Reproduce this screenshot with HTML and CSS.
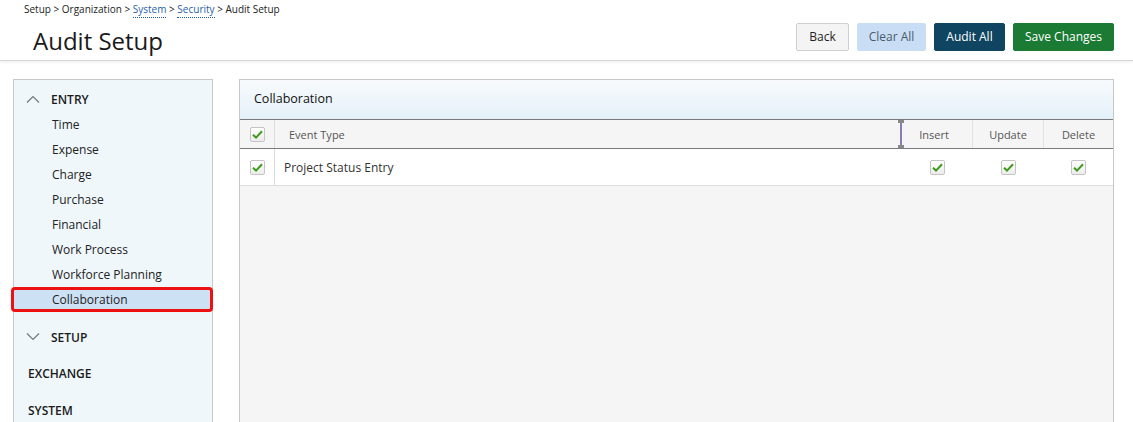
FILE: index.html
```html
<!DOCTYPE html>
<html>
<head>
<meta charset="utf-8">
<link rel="stylesheet" href="styles.css">
</head>
<body>
<header class="top">
  <div class="titles">
    <div class="crumbs">Setup &gt; Organization &gt; <a class="crumb-link">System</a> &gt; <a class="crumb-link">Security</a> &gt; Audit Setup</div>
    <h1 class="title">Audit Setup</h1>
  </div>
  <div class="actions">
    <button class="btn btn-back">Back</button>
    <button class="btn btn-clear">Clear All</button>
    <button class="btn btn-audit">Audit All</button>
    <button class="btn btn-save">Save Changes</button>
  </div>
</header>
<div class="content">
  <nav class="side">
    <div class="group-head"><svg class="chev" width="14" height="8" viewBox="0 0 14 8"><path d="M1 7.5L7 1.5L13 7.5" fill="none" stroke="#777" stroke-width="1.2"/></svg><span>ENTRY</span></div>
    <div class="item">Time</div>
    <div class="item">Expense</div>
    <div class="item">Charge</div>
    <div class="item">Purchase</div>
    <div class="item">Financial</div>
    <div class="item">Work Process</div>
    <div class="item">Workforce Planning</div>
    <div class="item item-active">Collaboration</div>
    <div class="group-head group-setup"><svg class="chev" width="14" height="8" viewBox="0 0 14 8"><path d="M1 0.5L7 6.5L13 0.5" fill="none" stroke="#777" stroke-width="1.2"/></svg><span>SETUP</span></div>
    <div class="plain-head">EXCHANGE</div>
    <div class="plain-head">SYSTEM</div>
  </nav>
  <section class="panel">
    <div class="panel-head">Collaboration</div>
    <div class="row row-head">
      <div class="c-check"><span class="cb"><svg width="11" height="9" viewBox="0 0 11 9"><path d="M1 4.8L4 7.6L10 1.2" fill="none" stroke="#3f9a1c" stroke-width="2"/></svg></span></div>
      <div class="c-type">Event Type</div>
      <div class="c-handle"></div>
      <div class="c-op c-insert">Insert</div>
      <div class="c-op">Update</div>
      <div class="c-op c-last">Delete</div>
    </div>
    <div class="row row-body">
      <div class="c-check"><span class="cb"><svg width="11" height="9" viewBox="0 0 11 9"><path d="M1 4.8L4 7.6L10 1.2" fill="none" stroke="#3f9a1c" stroke-width="2"/></svg></span></div>
      <div class="c-type c-type-body">Project Status Entry</div>
      <div class="c-op"><span class="cb"><svg width="11" height="9" viewBox="0 0 11 9"><path d="M1 4.8L4 7.6L10 1.2" fill="none" stroke="#3f9a1c" stroke-width="2"/></svg></span></div>
      <div class="c-op"><span class="cb"><svg width="11" height="9" viewBox="0 0 11 9"><path d="M1 4.8L4 7.6L10 1.2" fill="none" stroke="#3f9a1c" stroke-width="2"/></svg></span></div>
      <div class="c-op c-last"><span class="cb"><svg width="11" height="9" viewBox="0 0 11 9"><path d="M1 4.8L4 7.6L10 1.2" fill="none" stroke="#3f9a1c" stroke-width="2"/></svg></span></div>
    </div>
    <div class="panel-rest"></div>
  </section>
</div>
</body>
</html>
```
FILE: styles.css
```css
* { box-sizing: border-box; }
html, body { margin: 0; padding: 0; }
body {
  font-family: "Open Sans", "DejaVu Sans", sans-serif;
  color: #222;
  background: #fff;
  width: 1133px;
  height: 422px;
  overflow: hidden;
}
.top {
  height: 61px;
  display: flex;
  justify-content: space-between;
  align-items: flex-start;
  border-bottom: 1px solid #d6d6d6;
  box-shadow: 0 1px 3px rgba(0,0,0,0.08);
}
.titles { padding-left: 24px; }
.crumbs {
  font-size: 10px;
  line-height: 14px;
  padding-top: 2px;
  color: #222;
}
.crumb-link {
  color: #1f5fa8;
  border-bottom: 1px dotted #1f5fa8;
  padding-bottom: 1px;
}
.title {
  margin: 12px 0 0 9px;
  font-size: 24px;
  font-weight: 400;
  line-height: 26px;
  color: #1a1a1a;
}
.actions {
  display: flex;
  gap: 8px;
  padding: 23px 19px 0 0;
}
.btn {
  height: 28px;
  font-family: "Open Sans", "DejaVu Sans", sans-serif;
  font-size: 12px;
  border-radius: 2px;
  border: 1px solid transparent;
  padding: 0;
  line-height: 26px;
  white-space: nowrap;
  text-align: center;
}
.btn-back { background: #f4f4f4; border-color: #cfcfcf; color: #222; width: 53px; }
.btn-clear { background: #c9def5; border-color: #c9def5; color: #4a5a6a; width: 69px; }
.btn-audit { background: #0f4560; border-color: #0f4560; color: #fff; width: 71px; }
.btn-save { background: #1b7a33; border-color: #1b7a33; color: #fff; width: 101px; }

.content {
  display: flex;
  padding: 18px 0 0 13px;
  gap: 26px;
}
.side {
  width: 200px;
  height: 360px;
  background: #eff7fb;
  border: 1px solid #c8c8c8;
  padding-top: 9px;
  font-size: 12px;
}
.group-head {
  display: flex;
  align-items: center;
  height: 20px;
  font-weight: 600;
  font-size: 12px;
  padding-left: 12px;
  color: #1a1a1a;
}
.chev { margin-right: 11px; }
.group-setup { margin-top: 15px; }
.item {
  height: 25px;
  line-height: 25px;
  padding-left: 38px;
  color: #222;
}
.item:nth-child(2) { margin-top: 3px; }
.item-active {
  margin: 0 0 0 -3px;
  width: 202px;
  padding-left: 38px;
  background: #cde1f5;
  border: 3px solid #ee1111;
  border-radius: 4px;
  line-height: 19px;
}
.plain-head {
  font-weight: 600;
  font-size: 12px;
  padding-left: 14px;
  margin-top: 17px;
  height: 20px;
  line-height: 20px;
  color: #1a1a1a;
}
.group-setup + .plain-head { margin-top: 17px; }
.panel {
  width: 875px;
  height: 360px;
  border: 1px solid #c8c8c8;
  background: #f5f5f5;
  display: flex;
  flex-direction: column;
}
.panel-head {
  height: 40px;
  line-height: 38px;
  padding-left: 14px;
  font-size: 12.5px;
  font-weight: 500;
  color: #111;
  background: linear-gradient(#f8fbfd, #e3f0f8);
  border-bottom: 1px solid #7a7a7a;
}
.row { display: flex; align-items: center; }
.row-head {
  height: 29px;
  background: #f5f5f5;
  border-bottom: 1px solid #7a7a7a;
  font-size: 11px;
  color: #555;
}
.row-body {
  height: 37px;
  background: #fff;
  border-bottom: 1px solid #dedede;
  font-size: 12px;
}
.c-check {
  width: 35px;
  align-self: stretch;
  display: flex;
  align-items: center;
  justify-content: center;
  border-right: 1px solid #dcdcdc;
}
.c-type { flex: 1; padding-left: 14px; }
.c-type-body { padding-left: 9px; color: #333; }
.c-handle {
  width: 2px;
  align-self: stretch;
  background: #8a7bb3;
  position: relative;
}
.c-handle::before, .c-handle::after {
  content: "";
  position: absolute;
  left: -2px;
  width: 6px;
  height: 3px;
  background: #888;
}
.c-handle::before { top: 0; }
.c-handle::after { bottom: 0; }
.c-op {
  width: 71px;
  align-self: stretch;
  display: flex;
  align-items: center;
  justify-content: center;
  border-right: 1px solid #e2e2e2;
}
.c-insert { padding-right: 6px; }
.row-body .c-op { border-right: none; }
.c-last { width: 69px; border-right: none; }
.cb {
  width: 15px;
  height: 15px;
  border: 1px solid #c4c4c4;
  border-radius: 2px;
  background: linear-gradient(#fff, #ececec);
  display: flex;
  align-items: center;
  justify-content: center;
}
.panel-rest { flex: 1; }
```
